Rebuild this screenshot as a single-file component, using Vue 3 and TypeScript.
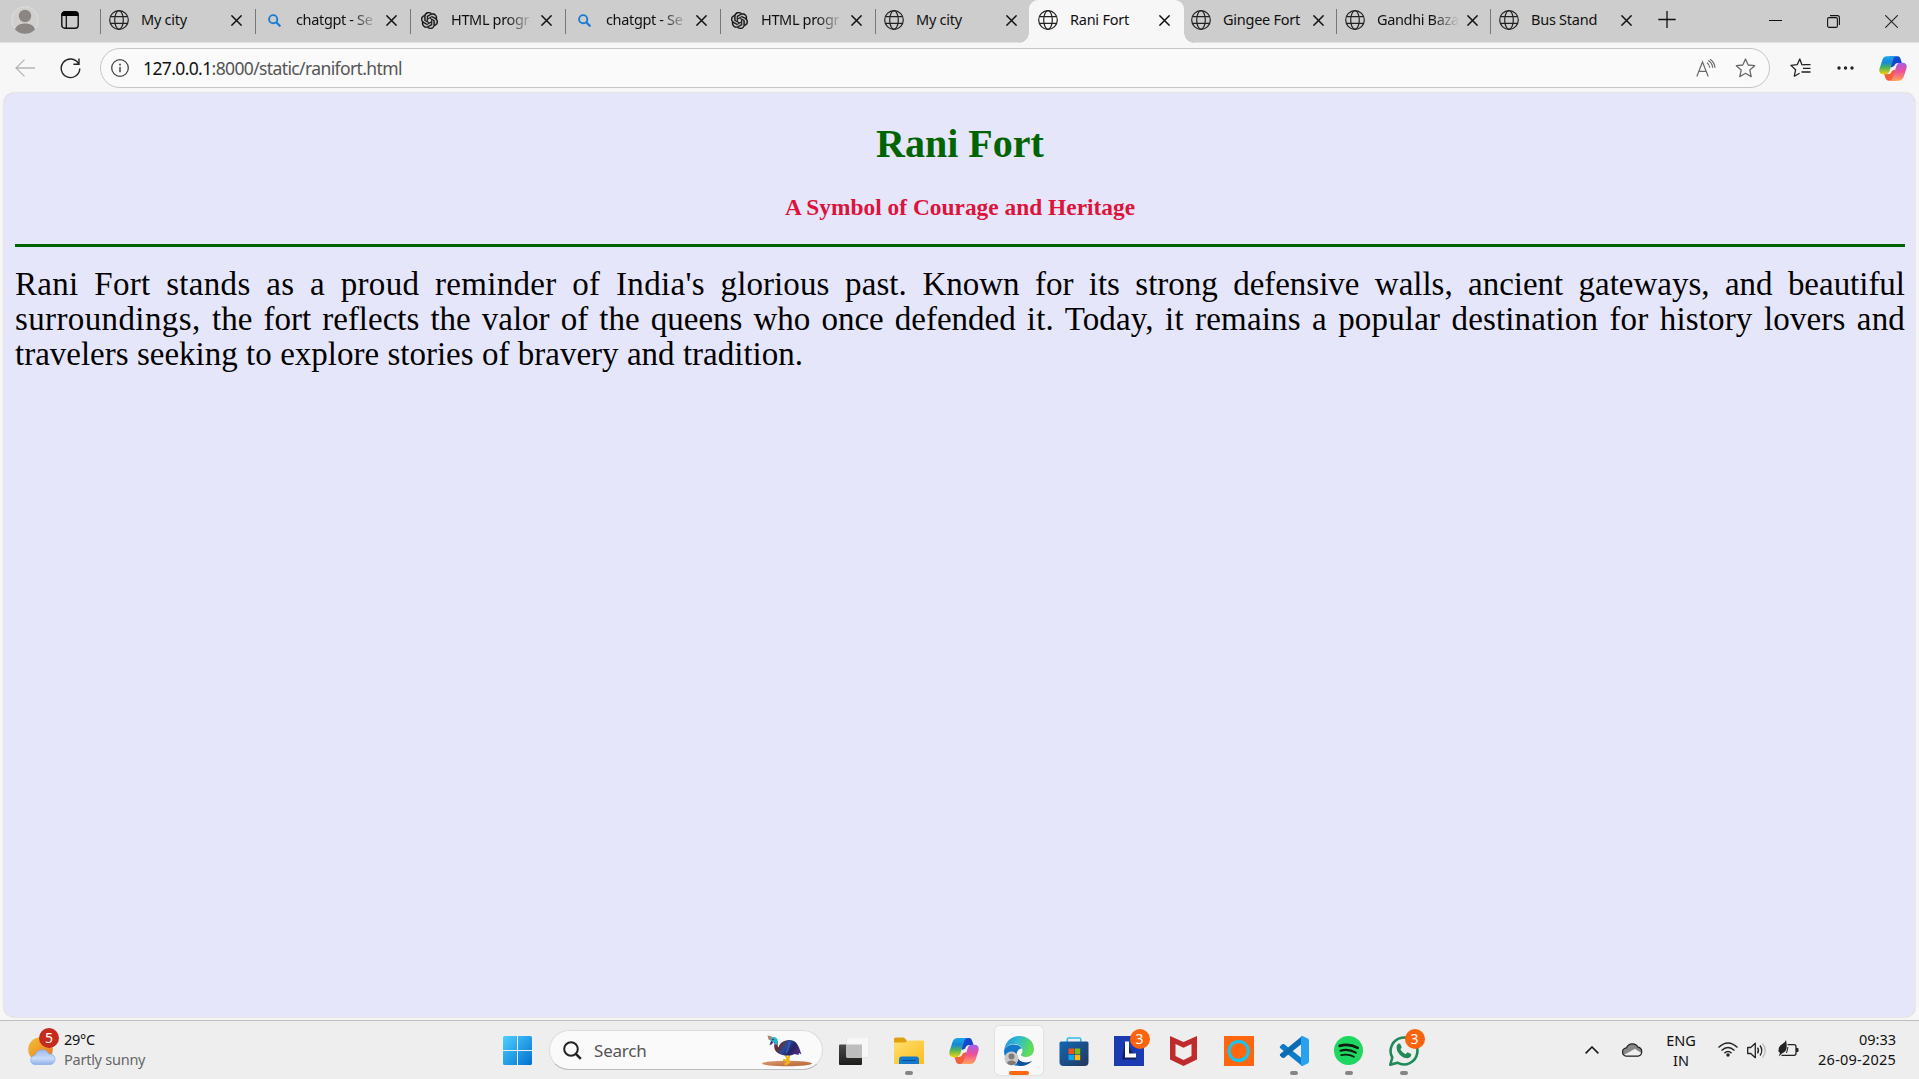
<script setup lang="ts">
interface Tab {
  title: string
  icon: 'globe' | 'search' | 'gpt'
  width: number
  active?: boolean
  divider?: boolean
  fade?: boolean
}

const tabs: Tab[] = [
  { title: 'My city', icon: 'globe', width: 155, divider: true },
  { title: 'chatgpt - Se', icon: 'search', width: 155, divider: true, fade: true },
  { title: 'HTML progr', icon: 'gpt', width: 155, divider: true, fade: true },
  { title: 'chatgpt - Se', icon: 'search', width: 155, divider: true, fade: true },
  { title: 'HTML progr', icon: 'gpt', width: 155, divider: true, fade: true },
  { title: 'My city', icon: 'globe', width: 154, divider: true },
  { title: 'Rani Fort', icon: 'globe', width: 155, active: true },
  { title: 'Gingee Fort', icon: 'globe', width: 154 },
  { title: 'Gandhi Baza', icon: 'globe', width: 154, divider: true, fade: true },
  { title: 'Bus Stand', icon: 'globe', width: 154, divider: true },
]

interface Run {
  text: string
  tracking: number
}

const lines: Run[][] = [
  [
    { text: "Rani Fort stands as a proud reminder of India's ", tracking: 0.3 },
    { text: 'glorious past. ', tracking: 0.1 },
    { text: 'Known for its strong defensive walls, ancient gateways, and beautiful', tracking: -0.02 },
  ],
  [
    { text: 'surroundings, ', tracking: 0.38 },
    { text: 'the fort reflects the valor of the queens who once defended ', tracking: -0.02 },
    { text: 'it. Today, it remains a popular destination for history lovers and', tracking: 0.16 },
  ],
  [{ text: 'travelers seeking to explore stories of bravery and tradition.', tracking: 0 }],
]

interface App {
  name: string
  running?: boolean
  active?: boolean
  badge?: number
}

const apps: App[] = [
  { name: 'taskview' },
  { name: 'explorer', running: true },
  { name: 'copilot' },
  { name: 'edge', active: true },
  { name: 'store' },
  { name: 'lenovo', badge: 3 },
  { name: 'mcafee' },
  { name: 'alexa' },
  { name: 'vscode', running: true },
  { name: 'spotify', running: true },
  { name: 'whatsapp', running: true, badge: 3 },
]
</script>

<template>
  <div class="screen">
    <svg class="defs" width="0" height="0">
      <defs>
        <linearGradient id="cpA" x1="0" y1="0" x2="0" y2="1">
          <stop offset="0" stop-color="#1ea5f0" /><stop offset=".35" stop-color="#1688d8" />
          <stop offset=".62" stop-color="#4cb35c" /><stop offset="1" stop-color="#f5d20a" />
        </linearGradient>
        <linearGradient id="cpB" x1="0" y1="0" x2="0" y2="1">
          <stop offset="0" stop-color="#a55cf0" /><stop offset=".5" stop-color="#ee5096" />
          <stop offset="1" stop-color="#ffa35c" />
        </linearGradient>
        <linearGradient id="cpC" x1="0" y1="0" x2="1" y2="1">
          <stop offset="0" stop-color="#1450d8" /><stop offset="1" stop-color="#123fc0" />
        </linearGradient>
        <linearGradient id="winG" gradientUnits="userSpaceOnUse" x1="0" y1="0" x2="29" y2="29">
          <stop offset="0" stop-color="#4fd0ff" /><stop offset="1" stop-color="#0070d0" />
        </linearGradient>
        <linearGradient id="sunG" x1="0" y1="0" x2="1" y2="1">
          <stop offset="0" stop-color="#edc43a" /><stop offset="1" stop-color="#f0701a" />
        </linearGradient>
        <linearGradient id="cloudG" x1="0" y1="0" x2="0" y2="1">
          <stop offset="0" stop-color="#9dbbf0" /><stop offset=".6" stop-color="#c9dcf8" /><stop offset="1" stop-color="#8fb0ec" />
        </linearGradient>
        <linearGradient id="foldG" x1="0" y1="0" x2="1" y2="1">
          <stop offset="0" stop-color="#ffdf70" /><stop offset="1" stop-color="#fbbd1c" />
        </linearGradient>
        <linearGradient id="edgeG" x1="0" y1="0" x2="1" y2=".3">
          <stop offset="0" stop-color="#2389d8" /><stop offset=".45" stop-color="#2bb9d4" /><stop offset="1" stop-color="#63dc58" />
        </linearGradient>
        <linearGradient id="storeG" x1="0" y1="0" x2="1" y2="1">
          <stop offset="0" stop-color="#1267b4" /><stop offset="1" stop-color="#22375c" />
        </linearGradient>
        <linearGradient id="tvG" x1="0" y1="0" x2="0" y2="1">
          <stop offset="0" stop-color="#4a4a48" /><stop offset="1" stop-color="#1c1c1b" />
        </linearGradient>
        <linearGradient id="birdG" x1="0" y1="0" x2="1" y2=".4">
          <stop offset="0" stop-color="#6a2a7a" /><stop offset=".3" stop-color="#5a3034" /><stop offset=".52" stop-color="#2a4a9c" /><stop offset=".75" stop-color="#252560" /><stop offset="1" stop-color="#4a2a78" />
        </linearGradient>
        <linearGradient id="sandG" x1="0" y1="0" x2="1" y2="1">
          <stop offset="0" stop-color="#dc9b72" /><stop offset="1" stop-color="#b4622f" />
        </linearGradient>
        <symbol id="copilot" viewBox="0 0 30 28">
          <path d="M11 1h9c2 0 2.800 1.500 3.400 3.500L24.500 8h-4c-2.500 0-3.600 1.500-4.200 3.400L13 13z" fill="url(#cpC)" />
          <path d="M19 27h-9c-2 0-2.800-1.500-3.400-3.500L5.500 20h4c2.500 0 3.600-1.500 4.200-3.400L17 15z" fill="#f4603c" />
          <path d="M8.500 1h10.200c-2 0-3 1.600-3.700 3.900l-3.500 11.400C10.600 19.200 9.200 20.200 7 20.200H4.600C1 20.200-.4 17.600.6 14L3.600 4.800C4.400 2.400 6 1 8.500 1z" fill="url(#cpA)" />
          <path d="M21.500 27H11.300c2 0 3-1.600 3.700-3.900l3.500-11.400c.9-2.900 2.300-3.900 4.500-3.900h2.400c3.600 0 5 2.600 4 6.200l-3 9.200c-.8 2.400-2.400 3.800-4.900 3.800z" fill="url(#cpB)" />
        </symbol>
      </defs>
    </svg>

    <header class="tabbar">
      <div class="lead">
        <svg class="avatar" width="28" height="28" viewBox="0 0 28 28">
          <circle cx="14" cy="14" r="13.300" fill="#d2d0ce" stroke="#e0deda" />
          <circle cx="14" cy="10" r="6.200" fill="#8b8683" />
          <path d="M4 23.500c1-4 5-6 10-6s9 2 10 6c-2.500 2.800-6 4.200-10 4.200s-7.500-1.400-10-4.200z" fill="#8b8683" />
        </svg>
        <svg class="tabact" width="18" height="18" viewBox="0 0 18 18">
          <rect x=".8" y=".8" width="16.400" height="16.400" rx="3" fill="none" stroke="#111" stroke-width="1.400" />
          <path d="M.5 5V3.500Q.5.5 3.500.5h11q3 0 3 3V5z" fill="#000" />
          <path d="M5.300 5v12" stroke="#111" stroke-width="1.300" />
        </svg>
      </div>
      <div
        v-for="(t, i) in tabs"
        :key="i"
        class="tab"
        :class="{ active: t.active, divider: t.divider }"
        :style="{ width: t.width + 'px' }"
      >
        <span class="fav">
          <svg v-if="t.icon === 'globe'" width="20" height="20" viewBox="0 0 20 20" fill="none" stroke="#222" stroke-width="1.200">
            <circle cx="10" cy="10" r="9.300" />
            <ellipse cx="10" cy="10" rx="4.300" ry="9.300" />
            <path d="M1.500 6.700h17M1.500 13.300h17" />
          </svg>
          <svg v-else-if="t.icon === 'search'" class="mag" width="13" height="13" viewBox="0 0 13 13" fill="none" stroke="#1a7ad4" stroke-width="1.900">
            <circle cx="5.200" cy="5.200" r="4.100" /><path d="M8.200 8.200l4.200 4.200" stroke-width="2.200" />
          </svg>
          <svg v-else class="gpt" width="17" height="17" viewBox="0 0 24 24" fill="#111" stroke="#111" stroke-width=".5">
            <path d="M22.2819 9.8211a5.9847 5.9847 0 0 0-.5157-4.9108 6.0462 6.0462 0 0 0-6.5098-2.9A6.0651 6.0651 0 0 0 4.9807 4.1818a5.9847 5.9847 0 0 0-3.9977 2.9 6.0462 6.0462 0 0 0 .7427 7.0966 5.98 5.98 0 0 0 .511 4.9107 6.051 6.051 0 0 0 6.5146 2.9001A5.9847 5.9847 0 0 0 13.2599 24a6.0557 6.0557 0 0 0 5.7718-4.2058 5.9894 5.9894 0 0 0 3.9977-2.9001 6.0557 6.0557 0 0 0-.7475-7.0729zm-9.022 12.6081a4.4755 4.4755 0 0 1-2.8764-1.0408l.1419-.0804 4.7783-2.7582a.7948.7948 0 0 0 .3927-.6813v-6.7369l2.02 1.1686a.071.071 0 0 1 .038.052v5.5826a4.504 4.504 0 0 1-4.4945 4.4944zm-9.6607-4.1254a4.4708 4.4708 0 0 1-.5346-3.0137l.142.0852 4.783 2.7582a.7712.7712 0 0 0 .7806 0l5.8428-3.3685v2.3324a.0804.0804 0 0 1-.0332.0615L9.74 19.9502a4.4992 4.4992 0 0 1-6.1408-1.6464zM2.3408 7.8956a4.485 4.485 0 0 1 2.3655-1.9728V11.6a.7664.7664 0 0 0 .3879.6765l5.8144 3.3543-2.0201 1.1685a.0757.0757 0 0 1-.071 0l-4.8303-2.7865A4.504 4.504 0 0 1 2.3408 7.872zm16.5963 3.8558L13.1038 8.364 15.1192 7.2a.0757.0757 0 0 1 .071 0l4.8303 2.7913a4.4944 4.4944 0 0 1-.6765 8.1042v-5.6772a.79.79 0 0 0-.407-.667zm2.0107-3.0231l-.142-.0852-4.7735-2.7818a.7759.7759 0 0 0-.7854 0L9.409 9.2297V6.8974a.0662.0662 0 0 1 .0284-.0615l4.8303-2.7866a4.4992 4.4992 0 0 1 6.6802 4.66zM8.3065 12.863l-2.02-1.1638a.0804.0804 0 0 1-.038-.0567V6.0742a4.4992 4.4992 0 0 1 7.3757-3.4537l-.142.0805L8.704 5.459a.7948.7948 0 0 0-.3927.6813zm1.0976-2.3654l2.602-1.4998 2.6069 1.4998v2.9994l-2.5974 1.4997-2.6067-1.4997Z" />
          </svg>
        </span>
        <span class="title" :class="{ fade: t.fade }">{{ t.title }}</span>
        <svg class="x" width="11" height="11" viewBox="0 0 11 11" stroke="#111" stroke-width="1.500"><path d="M.4.400l10.200 10.200M10.600.4.400 10.600" /></svg>
      </div>
      <div class="newtab">
        <svg width="18" height="18" viewBox="0 0 18 18" stroke="#111" stroke-width="1.300"><path d="M9 0v17M.3 8.500h17.400" /></svg>
      </div>
      <div class="winbtns">
        <svg width="13" height="13" viewBox="0 0 13 13" stroke="#111" stroke-width="1"><path d="M0 5.500h13" /></svg>
        <svg width="13" height="13" viewBox="0 0 13 13" fill="none" stroke="#111" stroke-width="1.100"><rect x=".6" y="2.600" width="9.800" height="9.800" rx="1.500" /><path d="M3 .6h7.400q2 0 2 2V10" /></svg>
        <svg width="13" height="13" viewBox="0 0 13 13" stroke="#222" stroke-width="1.100"><path d="M.2.200l12.600 12.600M12.800.2.200 12.800" /></svg>
      </div>
    </header>

    <div class="toolbar">
      <svg class="back" width="20" height="18" viewBox="0 0 20 18" fill="none" stroke="#b5b5b5" stroke-width="1.300"><path d="M20 9H1M9.500.6 1 9l8.500 8.400" /></svg>
      <svg class="reload" width="21" height="21" viewBox="0 0 21 21" fill="none" stroke="#222" stroke-width="1.400"><path d="M18.500 5.500A9.300 9.300 0 1 0 19.800 10.500M19 .5v5.700h-5.600" /></svg>
      <div class="url">
        <svg width="18" height="18" viewBox="0 0 18 18" fill="none" stroke="#444" stroke-width="1.300"><circle cx="9" cy="9" r="8.300" /><path d="M9 8v5.300" stroke-width="1.500" /><path d="M9 4.700v1.700" stroke-width="1.700" /></svg>
        <span class="address"><b>127.0.0.1</b>:8000/static/ranifort.html</span>
        <svg class="read" width="20" height="19" viewBox="0 0 20 19" fill="none" stroke="#6b6b6b" stroke-width="1.200">
          <path d="M.8 17.500 6.500 3l5.700 14.500M2.800 12.300h7.400M11 3.800q2.400 1.600 2.800 5M12.300 1.500q4 2.400 4.400 7.300M14 .3q4.600 3 5 8.500" />
        </svg>
        <svg class="star" width="21" height="20" viewBox="0 0 21 20" fill="none" stroke="#6b6b6b" stroke-width="1.300" stroke-linejoin="round"><path d="M10.500 1l2.700 6 6.500.7-4.900 4.400 1.400 6.500-5.700-3.300-5.700 3.300 1.400-6.500L1.300 7.700l6.500-.7z" /></svg>
      </div>
      <svg class="favs" width="21" height="20" viewBox="0 0 21 20" fill="none" stroke="#222" stroke-width="1.300" stroke-linejoin="round"><path d="M14.500 6.900l-2.600-.2L9.800 1 7.200 6.700.9 7.400l4.700 4.400-1.300 6.400 5.300-3M13 10.300h7.500M11.500 14h9M13.500 6.700h7" /></svg>
      <svg class="dots" width="17" height="4" viewBox="0 0 17 4" fill="#222"><circle cx="2" cy="2" r="1.700" /><circle cx="8.500" cy="2" r="1.700" /><circle cx="15" cy="2" r="1.700" /></svg>
      <svg class="cp" width="28" height="27"><use href="#copilot" /></svg>
    </div>

    <main class="page">
      <h1>Rani Fort</h1>
      <h3>A Symbol of Courage and Heritage</h3>
      <hr />
      <p class="story">
        <span v-for="(l, i) in lines" :key="i" class="line" :class="{ last: i === 2 }"><span v-for="(r, j) in l" :key="j" :style="{ letterSpacing: r.tracking + 'px' }">{{ r.text }}</span></span>
      </p>
    </main>

    <footer class="taskbar">
      <div class="weather">
        <div class="wicon">
          <svg width="28" height="28" viewBox="0 0 28 28">
            <circle cx="12.500" cy="12.500" r="12.300" fill="url(#sunG)" />
            <path d="M6.500 27.500A4.700 4.700 0 0 1 7 18.200a7.500 7.500 0 0 1 13.800-1.400 5.400 5.400 0 1 1 1.700 10.700z" fill="url(#cloudG)" stroke="#7fa2e6" stroke-width=".6" />
          </svg>
          <span class="alert">5</span>
        </div>
        <div class="wtext"><span class="temp">29°C</span><span class="cond">Partly sunny</span></div>
      </div>

      <div class="slot start">
        <svg width="29" height="29" viewBox="0 0 29 29" fill="url(#winG)">
          <path d="M1.500 0H14v14H0V1.500Q0 0 1.500 0zM15 0h12.500Q29 0 29 1.500V14H15zM0 15h14v14H1.500Q0 29 0 27.500zM15 15h14v12.500q0 1.500-1.500 1.500H15z" />
        </svg>
      </div>
      <div class="search">
        <svg width="19" height="19" viewBox="0 0 19 19" fill="none" stroke="#222" stroke-width="2"><circle cx="8" cy="8" r="6.800" /><path d="M12.800 12.800l5 5" stroke-width="2.500" /></svg>
        <span>Search</span>
        <svg class="bird" width="51" height="32" viewBox="0 0 51 32">
          <ellipse cx="26" cy="28.500" rx="25" ry="2.700" fill="url(#sandG)" />
          <path d="M24 19l2.500 5-1 4.500M28.500 19l-1 5 1 4M22 25l4 .5M23.500 29.500l4-1.500" fill="none" stroke="#f2b41b" stroke-width="1.900" />
          <path d="M13 7l3.500-1c.8 2.500-.5 5 .8 6.500C19 8 22 5.500 28 5c6-.3 8.500 4 10 7.500l2.500 7L38 18l-.5 2-4-1c-2 1.200-4 1.600-6.500 1.600C19 20.600 13.500 17 13.200 12c-.1-2.500.6-3-.2-5z" fill="url(#birdG)" />
          <path d="M9 3c3-2 7-1.200 7.600 1.800l.3 3.700-2 1.700-1.600-3L9.500 6z" fill="#22b6cf" />
          <path d="M10 6L8.500 10l2-.5 2.200-2.500z" fill="#3a2c87" />
          <path d="M6.500.6 11 1.500l-1 4-2.500-1z" fill="#a98272" />
          <path d="M29 7l-3.500 11" stroke="#2e62c8" stroke-width="1.500" />
          <circle cx="12" cy="4.500" r=".8" fill="#222" />
        </svg>
      </div>

      <div v-for="a in apps" :key="a.name" class="slot">
        <div class="tile" :class="{ on: a.active }">
          <svg v-if="a.name === 'taskview'" width="30" height="28" viewBox="0 0 30 28">
            <rect x="0" y="7.500" width="23" height="20.500" rx="1" fill="url(#tvG)" />
            <rect x="7.500" y="0" width="22.300" height="20.500" rx="1" fill="#f7f7f7" stroke="#ddd" stroke-width=".6" />
            <path d="M7.500 7.500H23v12.700H7.500z" fill="#bdbdbd" />
          </svg>
          <svg v-else-if="a.name === 'explorer'" width="30" height="27" viewBox="0 0 30 27">
            <path d="M0 5V2Q0 .5 1.500.5H9Q10.500.5 11.500 2l1.500 2v4H0z" fill="#dfa00b" />
            <path d="M0 5.500h11L14.500 3.500H29q1 0 1 1V27H0z" fill="url(#foldG)" />
            <path d="M5 27v-4.500Q5 19.500 8 19.500h14q3 0 3 3V27z" fill="#1478cc" />
            <path d="M8.500 23.500h13" stroke="#0a4d92" stroke-width="1" />
          </svg>
          <svg v-else-if="a.name === 'copilot'" width="30" height="28"><use href="#copilot" /></svg>
          <svg v-else-if="a.name === 'edge'" width="30" height="30" viewBox="0 0 30 30">
            <path d="M0 15C1 6 7 0 15.500 0 24 0 30 5.500 30 13c0 5-3.500 8-8 8-3.500 0-5.500-1.300-5-2.500.5-1 1.500-1.800 1.500-3.800C18.500 11 15 8 10 8 5 8 1 11 0 15z" fill="url(#edgeG)" />
            <path d="M0 15C1 11 5 8.500 10 8.500c4.500 0 7 2 7.700 4-3 0-5 3-5 6 0 5 4 8.300 9 8.300 2.500 0 4.300-.8 6-1.800C25 28 20.500 30 15.500 30 7 30 0 23.500 0 15z" fill="#1379cb" />
            <path d="M12.500 14.500c-2 6 3 12 9.500 12 2.500 0 4-.7 6-1.700C25.500 28 21 30 16 30c-5-2-9-9-3.500-15.500z" fill="#0f509d" />
            <circle cx="7.500" cy="22.500" r="7" fill="#c9c9c8" />
            <circle cx="7.500" cy="20.500" r="3" fill="#817b77" /><path d="M2.800 27q1.200-2.600 4.700-2.600t4.700 2.600q-2 2.300-4.700 2.300T2.800 27z" fill="#817b77" />
          </svg>
          <svg v-else-if="a.name === 'store'" width="30" height="30" viewBox="0 0 30 30">
            <path d="M8.200 7V3.500Q8.200 2 9.700 2h10.600q1.500 0 1.500 1.500V7" fill="none" stroke="#35b9ee" stroke-width="1.600" />
            <path d="M.5 7q0-1.500 1.500-1.500h26q1.500 0 1.500 1.500v19q0 4-4 4h-21q-4 0-4-4z" fill="url(#storeG)" />
            <path d="M9.500 12.500H15V18H9.500z" fill="#f1511b" /><path d="M15.700 12.500h5.500V18h-5.500z" fill="#80ba13" />
            <path d="M9.500 18.700H15v5.500H9.500z" fill="#0fa6ef" /><path d="M15.700 18.700h5.500v5.500h-5.500z" fill="#fdba10" />
          </svg>
          <svg v-else-if="a.name === 'lenovo'" width="30" height="30" viewBox="0 0 30 30">
            <path d="M0 0h30v30H0z" fill="#1d3bb0" /><path d="M11 5.500 8 23.500h14v-2z" fill="#112060" /><path d="M11 5.500h4v12h7v4H11z" fill="#fff" />
          </svg>
          <svg v-else-if="a.name === 'mcafee'" width="27" height="30" viewBox="0 0 27 30">
            <path d="M0 0l13.500 6L27 0v23.500L13.500 30 0 23.500z" fill="#bf2a2b" /><path d="M5.500 8l8 3.800 8-3.800v12l-8 4-8-4z" fill="#eee" />
          </svg>
          <svg v-else-if="a.name === 'alexa'" width="30" height="30" viewBox="0 0 30 30">
            <path d="M0 0h30v30H0z" fill="#ff6610" /><circle cx="14.700" cy="15" r="9.600" fill="none" stroke="#14c6f4" stroke-width="3" /><path d="M13.300 22.500v3.800q6 0 8.500-3.800l-3-1.200q-2 2-5.500 1.200z" fill="#14c6f4" />
          </svg>
          <svg v-else-if="a.name === 'vscode'" width="30" height="30" viewBox="0 0 30 30">
            <path d="M1 10.500 3 8.200l2-.2 17.500 14V29.500L.8 11.700z" fill="#0a7ccb" />
            <path d="M1 19.500 3 21.800l2 .2L22.500 8V.5L.8 18.300z" fill="#0b6cb5" />
            <path d="M22 0q.7-.3 1.500.1l5.300 2.500q1.200.6 1.200 1.800v21.200q0 1.200-1.200 1.800l-5.300 2.500q-.8.400-1.500.1z" fill="#27a1f0" />
          </svg>
          <svg v-else-if="a.name === 'spotify'" width="29" height="29" viewBox="0 0 29 29" fill="none" stroke="#101a12" stroke-linecap="round">
            <circle cx="14.500" cy="14.500" r="14.500" fill="#1ed760" stroke="none" />
            <path d="M5.700 9.900q9.500-2.600 18 2" stroke-width="2.700" /><path d="M6.500 14.700q8-2.200 15.300 1.900" stroke-width="2.200" /><path d="M7.200 19.100q7-1.700 12.700 1.700" stroke-width="1.800" />
          </svg>
          <svg v-else width="30" height="30" viewBox="0 0 30 30" fill="none">
            <path d="M1.300 28.700l2-7.200A13.400 13.400 0 1 1 8.500 26.700z" stroke="#1f8a57" stroke-width="2.600" stroke-linejoin="round" />
            <path d="M9.500 7.600l1.700.1 1.500 3.600-1.300 2.100q1.800 3.200 5.200 4.800l1.900-2 3.700 1.800q.2 3.800-3.800 4.200-4.200 0-7.600-3.500T7.500 11.400q0-2.700 2-3.800z" fill="#1f8a57" />
          </svg>
          <span v-if="a.badge" class="badge">{{ a.badge }}</span>
          <span v-if="a.active" class="bar"></span>
          <span v-else-if="a.running" class="dot"></span>
        </div>
      </div>

      <div class="tray">
        <svg class="chev" width="14" height="8" viewBox="0 0 14 8" fill="none" stroke="#111" stroke-width="1.500"><path d="M.6 7.400 7 1l6.400 6.400" /></svg>
        <svg class="onedrive" width="21" height="15" viewBox="0 0 21 15">
          <path d="M4.800 14.200a4.200 4.200 0 0 1-.3-8.400 6.400 6.400 0 0 1 11.500-.6 4.600 4.600 0 0 1 .2 9z" fill="#888" />
          <path d="M2.300 12.700 13 6.800l6.500 4.400q-1 3-3.500 3H5q-1.800-.2-2.700-1.500z" fill="#eee" />
          <path d="M4.800 14.200a4.200 4.200 0 0 1-.3-8.400 6.400 6.400 0 0 1 11.500-.6 4.600 4.600 0 0 1 .2 9z" fill="none" stroke="#222" stroke-width="1.200" />
        </svg>
        <div class="lang"><span>ENG</span><span>IN</span></div>
        <svg class="wifi" width="20" height="15" viewBox="0 0 20 15" fill="none" stroke="#222" stroke-width="1.400"><path d="M.5 5.500q9.500-9 19 0M3.500 8.400q6.500-6 13 0M6.400 11.200q3.600-3.400 7.200 0" /><circle cx="10" cy="13" r="1.700" fill="#222" stroke="none" /></svg>
        <svg class="vol" width="20" height="17" viewBox="0 0 20 17" fill="none" stroke="#222" stroke-width="1.300"><path d="M.7 5.500h3L8.300 1.300v14.400L3.700 11.500h-3z" stroke-linejoin="round" /><path d="M10.500 5.700q2 2.800 0 5.600M13 3.500q3.600 5 0 10" /><path d="M15.500 1.300q5.400 7.200 0 14.400" stroke="#bbb" /></svg>
        <svg class="bat" width="21" height="17" viewBox="0 0 21 17"><path d="M9.500 4.700H16q2 0 2 2v6.600q0 2-2 2H3.500" fill="none" stroke="#222" stroke-width="1.300" /><path d="M18 8h1.700q.8 0 .8 1v2q0 1-.8 1H18z" fill="#222" /><path d="M8 0q-.5 2.500-4 4.300-4 2.200-3.500 7.200L2 13l-1.300 3.500 3.500-3.300Q8.500 12 8.700 7 8.800 3 8 0z" fill="#222" /><path d="M8.500 13 10 7" stroke="#222" /></svg>
        <div class="clock"><span>09:33</span><span class="date">26-09-2025</span></div>
      </div>
    </footer>
  </div>
</template>

<style>
body {
  margin: 0;
  overflow: hidden;
}
</style>

<style scoped>
.screen {
  width: 1919px;
  height: 1079px;
  display: flex;
  flex-direction: column;
  overflow: hidden;
  background: #f7f7f7;
  font-family: 'Noto Sans', 'Open Sans', sans-serif;
  color: #111;
}
.screen * { box-sizing: border-box; }
.screen svg { display: block; flex: none; }
.defs { position: absolute; }

.tabbar {
  flex: none;
  height: 43px;
  display: flex;
  background: #cdcdcd;
  border-bottom: 1px solid #e2e2e2;
}
.lead { width: 100px; flex: none; display: flex; padding: 6px 0 0 11px; }
.tabact { margin: 5px 0 0 22px; }
.tab {
  position: relative;
  flex: none;
  display: flex;
  height: 42px;
  padding-left: 9px;
}
.tab.divider::before {
  content: '';
  position: absolute;
  left: 0;
  top: 9px;
  width: 1px;
  height: 25px;
  background: #777;
}
.tab.active {
  background: #f7f7f7;
  height: 43px;
  border-radius: 9px 9px 0 0;
  margin-right: -2px;
  z-index: 1;
}
.tab.active::before,
.tab.active::after {
  content: '';
  position: absolute;
  bottom: 0;
  width: 10px;
  height: 10px;
}
.tab.active::before { left: -10px; background: radial-gradient(circle at 0 0, #cdcdcd 9.5px, #f7f7f7 10px); }
.tab.active::after { right: -10px; background: radial-gradient(circle at 100% 0, #cdcdcd 9.5px, #f7f7f7 10px); }
.fav { width: 32px; flex: none; padding-top: 10px; }
.mag { margin: 4px 0 0 4px; }
.gpt { margin: 2px 0 0 2px; }
.title {
  width: 81px;
  flex: none;
  white-space: nowrap;
  font-size: 14.5px;
  letter-spacing: -0.25px;
  line-height: 38px;
  height: 40px;
}
.title.fade {
  letter-spacing: -0.35px;
  -webkit-mask-image: linear-gradient(90deg, #000 56px, transparent 82px);
  mask-image: linear-gradient(90deg, #000 56px, transparent 82px);
}
.x { margin: 15px 0 0 9px; }
.active .x { margin-left: 8px; }
.newtab { margin: 11px 0 0 14px; flex: none; }
.winbtns { margin-left: auto; display: flex; gap: 45px; padding: 15px 21px 0 0; }

.toolbar {
  flex: none;
  height: 50px;
  display: flex;
  align-items: center;
  padding: 0 12px 0 15px;
}
.reload { margin-left: 25px; }
.url {
  width: 1670px;
  height: 40px;
  margin-left: 19px;
  border: 1px solid #c6c6c6;
  border-radius: 20px;
  background: #fafafa;
  display: flex;
  align-items: center;
  padding: 0 13px 0 10px;
}
.address {
  margin: -1px 0 0 14px;
  font-size: 17.5px;
  letter-spacing: -0.62px;
  color: #555;
}
.address b { font-weight: 400; color: #111; }
.read { margin-left: auto; }
.star { margin-left: 19px; }
.favs { margin-left: 20px; }
.dots { margin-left: 26px; }
.cp { margin-left: auto; }

.page {
  flex: none;
  width: 1911px;
  height: 924px;
  margin-left: 4px;
  padding: 0 10px 0 11px;
  background: #e6e6fa;
  border-radius: 10px;
  box-shadow: 0 0 2px rgba(0, 0, 0, 0.25);
  font-family: 'Liberation Serif', serif;
}
h1 {
  margin: 28px 0 0;
  height: 46px;
  line-height: 46px;
  font-size: 40px;
  color: #006400;
  text-align: center;
}
h3 {
  margin: 27px 0 0;
  height: 27px;
  line-height: 27px;
  font-size: 23.4px;
  color: #dc143c;
  text-align: center;
}
hr { margin: 23px 0 0; border: 0; height: 3px; background: #006400; }
.story { margin: 20px 0 0; font-size: 33px; line-height: 35px; color: #000; }
.line {
  display: block;
  height: 35px;
  text-align: justify;
  text-align-last: justify;
}
.last { width: 788px; word-spacing: -2px; }

.taskbar {
  flex: none;
  position: relative;
  height: 59px;
  margin-top: 3px;
  border-top: 1px solid #bdbdbd;
  background: #eee;
  display: flex;
}
.weather { width: 490px; flex: none; display: flex; padding: 8px 0 0 28px; }
.wicon { position: relative; padding-top: 8px; }
.alert {
  position: absolute;
  left: 11px;
  top: -1px;
  width: 20px;
  height: 20px;
  border-radius: 50%;
  background: #c42b1c;
  color: #fff;
  font-size: 14px;
  line-height: 20px;
  text-align: center;
}
.wtext { margin-left: 8px; display: flex; flex-direction: column; font-size: 14.5px; line-height: 20px; letter-spacing: -0.25px; }
.cond { color: #666; }
.slot { width: 55px; flex: none; display: flex; justify-content: center; padding-top: 5px; }
.start { padding-top: 15px; }
.search {
  flex: none;
  width: 274px;
  height: 40px;
  margin: 9px 3px 0 4px;
  border: 1px solid #dcdcdc;
  border-bottom-color: #bbb;
  border-radius: 20px;
  background: #fafafa;
  display: flex;
  align-items: center;
  padding: 0 10px 0 13px;
  font-size: 17px;
  letter-spacing: -0.2px;
  color: #555;
}
.search span { margin-left: 12px; }
.bird { margin-left: auto; margin-top: 1px; }
.tile {
  position: relative;
  width: 48px;
  height: 49px;
  border-radius: 5px;
  display: flex;
  align-items: center;
  justify-content: center;
}
.tile.on { background: #f8f8f8; box-shadow: 0 0 1px 1px #e2e2e2; }
.dot, .bar {
  position: absolute;
  bottom: 0;
  left: 20px;
  width: 8px;
  height: 4px;
  border-radius: 2px;
  background: #858585;
}
.bar { left: 14px; width: 20px; background: #ff6610; }
.badge {
  position: absolute;
  left: 25px;
  top: 3px;
  width: 20px;
  height: 20px;
  border-radius: 50%;
  background: #fb640d;
  color: #fff;
  font-size: 14px;
  line-height: 20px;
  text-align: center;
}
.tray { margin-left: auto; display: flex; padding-right: 23px; align-items: flex-start; }
.chev { margin: 25px 0 0; }
.onedrive { margin: 21px 0 0 23px; }
.lang { width: 40px; margin: 9px 0 0 18px; display: flex; flex-direction: column; align-items: center; font-size: 14.5px; line-height: 20px; }
.wifi { margin: 21px 0 0 17px; }
.vol { margin: 21px 0 0 9px; }
.bat { margin: 19px 0 0 11px; }
.clock { width: 97px; display: flex; flex-direction: column; align-items: flex-end; font-size: 14.5px; line-height: 20px; margin-top: 8px; }
.date { letter-spacing: 0.22px; }
</style>
